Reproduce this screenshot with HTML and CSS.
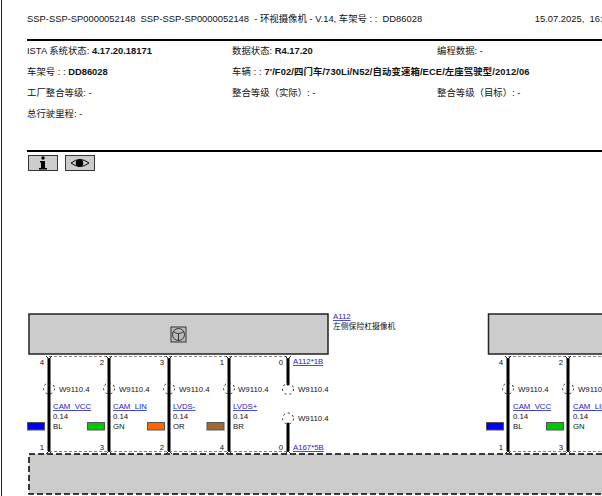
FILE: index.html
```html
<!DOCTYPE html>
<html>

<head>
  <title>SSP-SSP-SP0000052148</title>
  <link rel="stylesheet" href="styles.css">
</head>

<body>
  <div class="page">
    <div class="header">
      <div class="title">
        <span>SSP-SSP-SP0000052148&nbsp; SSP-SSP-SP0000052148 &nbsp;- 环视摄像机 - V.14, 车架号 : :&nbsp; DD86028</span>
        <span class="date">15.07.2025,&nbsp; 16:32</span>
      </div>
      <div class="info">
        <div>ISTA 系统状态: <b>4.17.20.18171</b></div>
        <div>数据状态: <b>R4.17.20</b></div>
        <div>编程数据: -</div>
        <div>车架号 : : <b>DD86028</b></div>
        <div class="wide">车辆 : : <b>7'/F02/四门车/730Li/N52/自动变速箱/ECE/左座驾驶型/2012/06</b></div>
        <div>工厂整合等级: -</div>
        <div>整合等级（实际）: -</div>
        <div>整合等级（目标）: -</div>
        <div>总行驶里程: -</div>
      </div>
      <div class="tools">
        <button class="tool"><svg width="12" height="14" viewBox="0 0 12 14"><circle cx="6" cy="2" r="1.7" /><path d="M3 5h5v7h2v1.5H2V12h2V6.500H3z" /></svg></button>
        <button class="tool"><svg width="20" height="10" viewBox="0 0 20 10"><path d="M1 5q9-7 18 0q-9 7-18 0z" fill="none" stroke="#000" stroke-width="1" /><circle cx="9.500" cy="5" r="3.800" /></svg></button>
      </div>
    </div>

    <svg class="diagram" width="602" height="196" viewBox="0 300 602 196">
      <!-- component boxes -->
      <rect class="box" x="29" y="314" width="299" height="40" />
      <rect class="box" x="488.500" y="314" width="130" height="40" />
      <rect class="box dashed" x="29" y="454" width="590" height="40" />

      <g class="sym">
        <rect x="171" y="327" width="15" height="15" />
        <circle cx="178.500" cy="334.500" r="6" />
        <path d="M173 331.500q5.500 4 11 0M178.500 334v7" />
      </g>

      <a href="#"><text class="link" x="333" y="319">A112</text></a>
      <text x="333" y="329">左侧保险杠摄像机</text>

      <path class="thin" d="M49 356.500H288M49 451.500H288M508 356.500H602M508 451.500H602" />

      <!-- wires -->
      <path class="wire" d="M49 358V451M109 358V451M169 358V451M229 358V451M288 358V383M288 425V451M508 358V451M568 358V451" />
      <path class="tick" d="M46 356l3 3 3-3M106 356l3 3 3-3M166 356l3 3 3-3M226 356l3 3 3-3M285 356l3 3 3-3M505 356l3 3 3-3M565 356l3 3 3-3M46 454l3-3 3 3M106 454l3-3 3 3M166 454l3-3 3 3M226 454l3-3 3 3M285 454l3-3 3 3M505 454l3-3 3 3M565 454l3-3 3 3" />
      <circle class="dot" cx="288" cy="384" r="1.500" />
      <circle class="dot" cx="288" cy="424" r="1.500" />

      <g class="ring">
        <circle cx="49" cy="388.500" r="5.500" />
        <circle cx="109" cy="388.500" r="5.500" />
        <circle cx="169" cy="388.500" r="5.500" />
        <circle cx="229" cy="388.500" r="5.500" />
        <circle cx="288" cy="389" r="5.500" />
        <circle cx="288" cy="418.500" r="5.500" />
        <circle cx="508" cy="388.500" r="5.500" />
        <circle cx="568" cy="388.500" r="5.500" />
      </g>

      <!-- colour swatches -->
      <rect class="swatch" x="27.500" y="422.500" width="17" height="7.500" fill="#0000f0" />
      <rect class="swatch" x="87.500" y="422.500" width="17" height="7.500" fill="#00c800" />
      <rect class="swatch" x="147.500" y="422.500" width="17" height="7.500" fill="#ff6600" />
      <rect class="swatch" x="207" y="422.500" width="17" height="7.500" fill="#a0693c" />
      <rect class="swatch" x="486.500" y="422.500" width="17" height="7.500" fill="#0000f0" />
      <rect class="swatch" x="546.500" y="422.500" width="17" height="7.500" fill="#00c800" />

      <!-- pin numbers -->
      <g class="pin">
        <text x="44" y="365">4</text><text x="44" y="450">1</text>
        <text x="104" y="365">2</text><text x="104" y="450">3</text>
        <text x="164" y="365">3</text><text x="164" y="450">2</text>
        <text x="224" y="365">1</text><text x="224" y="450">4</text>
        <text x="283" y="365">0</text><text x="283" y="450">0</text>
        <text x="503" y="365">4</text><text x="503" y="450">1</text>
        <text x="563" y="365">2</text><text x="563" y="450">3</text>
      </g>

      <a href="#"><text class="link" x="293" y="364">A112*1B</text></a>
      <a href="#"><text class="link" x="293" y="450">A167*5B</text></a>

      <text x="59" y="392">W9110.4</text>
      <text x="119" y="392">W9110.4</text>
      <text x="179" y="392">W9110.4</text>
      <text x="238" y="392">W9110.4</text>
      <text x="298" y="392">W9110.4</text>
      <text x="298" y="421">W9110.4</text>
      <text x="518" y="392">W9110.4</text>
      <text x="578" y="392">W9110.4</text>

      <a href="#"><text class="link" x="53" y="409">CAM_VCC</text></a>
      <text x="53" y="419">0.14</text>
      <text x="53" y="429">BL</text>
      <a href="#"><text class="link" x="113" y="409">CAM_LIN</text></a>
      <text x="113" y="419">0.14</text>
      <text x="113" y="429">GN</text>
      <a href="#"><text class="link" x="173" y="409">LVDS-</text></a>
      <text x="173" y="419">0.14</text>
      <text x="173" y="429">OR</text>
      <a href="#"><text class="link" x="233" y="409">LVDS+</text></a>
      <text x="233" y="419">0.14</text>
      <text x="233" y="429">BR</text>
      <a href="#"><text class="link" x="513" y="409">CAM_VCC</text></a>
      <text x="513" y="419">0.14</text>
      <text x="513" y="429">BL</text>
      <a href="#"><text class="link" x="573" y="409">CAM_LIN</text></a>
      <text x="573" y="419">0.14</text>
      <text x="573" y="429">GN</text>
    </svg>
  </div>
</body>

</html>
```

FILE: styles.css
```css
html,
body {
  margin: 0;
  height: 100%;
  overflow: hidden;
  background-color: #fff;
}

body {
  font-family: "Liberation Sans", "Noto Sans CJK SC", sans-serif;
  font-size: 9.4px;
  color: #111;
}

.page {
  width: 600px;
  height: 496px;
  margin-left: 1px;
  border-left: 1px solid #222;
  overflow: hidden;
}

.header {
  padding: 13px 0 0 25px;
  height: 158px;
}

.title {
  display: flex;
  justify-content: space-between;
  width: 640px;
  height: 26px;
  line-height: 12px;
  border-bottom: 2px solid #000;
  white-space: nowrap;
}

.date {
  margin-right: 54px;
}

.info {
  display: grid;
  grid-template-columns: 205px 205px 170px;
  grid-auto-rows: 21px;
  height: 105px;
  padding-top: 4px;
  line-height: 12px;
  white-space: nowrap;
}

.wide {
  grid-column: span 2;
  letter-spacing: 0.1px;
}

.tools {
  display: flex;
  gap: 7px;
  border-top: 2px solid #000;
  width: 640px;
  padding: 3px 0 0 1px;
}

.tool {
  display: flex;
  align-items: center;
  justify-content: center;
  width: 30px;
  height: 16px;
  padding: 0;
  background-color: #ccc;
  border: 1px solid #333;
}

.diagram {
  display: block;
  margin: 129px 0 0 -2px;
  font-size: 7.8px;
}

.diagram text {
  fill: #111;
}

.diagram .link {
  fill: #1a1ac8;
  text-decoration: underline;
}

.box {
  fill: #ccc;
  stroke: #222;
  stroke-width: 1.5;
}

.dashed {
  stroke: #000;
  stroke-dasharray: 6 3;
}

.sym rect,
.sym circle,
.sym path {
  fill: none;
  stroke: #333;
  stroke-width: 1;
}

.sym rect {
  fill: #bbb;
}

.thin {
  fill: none;
  stroke: #888;
  stroke-width: 1;
  stroke-dasharray: 3 2;
}

.wire {
  fill: none;
  stroke: #000;
  stroke-width: 3;
}

.tick {
  fill: none;
  stroke: #222;
  stroke-width: 1;
}

.ring circle {
  fill: none;
  stroke: #222;
  stroke-width: 1;
  stroke-dasharray: 2 3;
}

.swatch {
  stroke: #555;
  stroke-width: 1;
}

.pin text {
  text-anchor: end;
}
```
